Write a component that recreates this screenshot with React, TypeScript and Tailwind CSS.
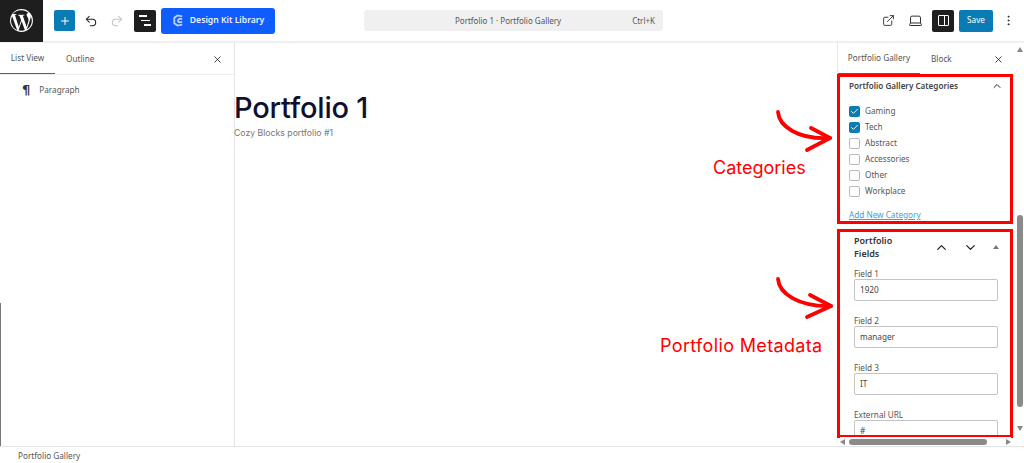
import { ChevronDown, ChevronUp, Check, ExternalLink, Laptop, MoreVertical, Plus, Redo2, Undo2, X } from "lucide-react";

const ui = "font-['Noto_Sans','Open_Sans',sans-serif]";

const categories = [
  { name: "Gaming", checked: true },
  { name: "Tech", checked: true },
  { name: "Abstract", checked: false },
  { name: "Accessories", checked: false },
  { name: "Other", checked: false },
  { name: "Workplace", checked: false },
];

const fields = [
  { label: "Field 1", value: "1920" },
  { label: "Field 2", value: "manager" },
  { label: "Field 3", value: "IT" },
  { label: "External URL", value: "#" },
];

function WpLogo() {
  return (
    <svg viewBox="0 0 24 24" className="h-[25px] w-[25px]" fill="#fff">
      <path d="M12 1a11 11 0 1 0 0 22 11 11 0 0 0 0-22Zm0 1.1c2.58 0 4.93 1 6.7 2.62h-.13c-1 0-1.7.86-1.7 1.78 0 .83.48 1.53 1 2.36.38.67.83 1.53.83 2.78 0 .86-.33 1.86-.77 3.25l-1 3.36-3.65-10.85c.6-.03 1.15-.1 1.15-.1.54-.06.48-.86-.06-.83 0 0-1.63.13-2.68.13-.99 0-2.65-.13-2.65-.13-.54-.03-.6.8-.06.83 0 0 .51.07 1.05.1l1.57 4.29-2.2 6.6L5.74 6.6c.6-.03 1.15-.1 1.15-.1.54-.06.48-.86-.06-.83 0 0-1.63.13-2.68.13h-.5A9.9 9.9 0 0 1 12 2.1ZM3 7.98l4.9 13.4A9.9 9.9 0 0 1 3 7.98Zm17.9.15A9.9 9.9 0 0 1 17 20.86l3.03-8.76c.57-1.42.76-2.56.76-3.57 0-.14 0-.27-.01-.4h.12ZM12.17 12.8l3 8.22.07.14a9.9 9.9 0 0 1-6.08.16l3.01-8.52Z" />
    </svg>
  );
}

function TopBar() {
  return (
    <header className="flex h-[43px] shrink-0 items-center border-b-2 border-[#f0f0f0] bg-white">
      <div className="flex h-[43px] w-[43px] shrink-0 items-center justify-center bg-[#1e1e1e]">
        <WpLogo />
      </div>
      <button className="ml-[11px] flex h-[21px] w-[21px] items-center justify-center rounded-[2px] bg-[#0a7cb5] text-white">
        <Plus size={12} strokeWidth={2} />
      </button>
      <Undo2 size={14} strokeWidth={1.8} className="ml-[9px] text-[#222]" />
      <Redo2 size={14} strokeWidth={1.8} className="ml-[12px] text-[#c4c4c4]" />
      <div className="ml-[10px] flex h-[22px] w-[22px] flex-col items-center justify-center gap-[3px] rounded-[2px] bg-[#1e1e1e]">
        <span className="ml-[-4px] h-[1.5px] w-[8px] bg-white" />
        <span className="ml-[1px] h-[1.5px] w-[9px] bg-white" />
        <span className="ml-[5px] h-[1.5px] w-[7px] bg-white" />
      </div>
      <button className={`${ui} ml-[5px] flex h-[26px] w-[114px] items-center justify-center gap-[5px] rounded-[3px] bg-[#0f5cff] text-[8.6px] font-semibold text-[#eef3ff]`}>
        <svg viewBox="0 0 14 14" className="h-[13px] w-[13px]" fill="none" stroke="#bcd0ff" strokeWidth="2">
          <path d="M11 2.5 6 1.5 2.5 4v6L6 12.5l5-1" />
          <path d="M11 5.5 8 5 6.5 6.5v1.5L8 9l3-.5" />
        </svg>
        Design Kit Library
      </button>
      <div className={`${ui} ml-[89px] flex h-[21px] w-[299px] items-center rounded-[3px] bg-[#f0f0f0] pr-[8px] text-[8px] text-[#555]`}>
        <span className="flex-1 pl-[20px] text-center">Portfolio 1 · Portfolio Gallery</span>
        <span>Ctrl+K</span>
      </div>
      <div className="ml-auto flex items-center">
        <ExternalLink size={13} strokeWidth={1.6} className="text-[#222]" />
        <Laptop size={15} strokeWidth={1.5} className="ml-[13px] text-[#222]" />
        <div className="ml-[9px] flex h-[22px] w-[22px] items-center justify-center rounded-[2px] bg-[#1e1e1e]">
          <div className="flex h-[11px] w-[11px] justify-end rounded-[1px] border border-white">
            <span className="w-[4px] border-l border-white" />
          </div>
        </div>
        <button className={`${ui} ml-[5px] h-[22px] w-[34px] rounded-[2px] bg-[#0a7cb5] text-[8.2px] text-white`}>Save</button>
        <MoreVertical size={13} strokeWidth={1.8} className="ml-[9px] mr-[9px] text-[#333]" />
      </div>
    </header>
  );
}

function ListPanel() {
  return (
    <aside className={`${ui} relative w-[235px] shrink-0 border-r border-[#e4e4e4] bg-white text-[8.2px] text-[#555]`}>
      <div className="flex h-[32px] items-center border-b border-[#eee] pt-[1px]">
        <div className="flex h-full w-[55px] items-center justify-center border-b-[1.5px] border-[#0a7cb5]">List View</div>
        <div className="ml-[11px]">Outline</div>
        <X size={11} strokeWidth={1.8} className="ml-auto mr-[11px] text-[#222]" />
      </div>
      <div className="flex items-center gap-[9px] pl-[22px] pt-[6px]">
        <span className="font-['DejaVu_Sans',sans-serif] text-[13px] leading-[18px] font-bold text-[#333]">¶</span>
        <span>Paragraph</span>
      </div>
      <div className="absolute bottom-0 left-0 h-[143px] w-px bg-[#777]" />
    </aside>
  );
}

function Canvas() {
  return (
    <main className="relative flex-1 bg-white">
      <h1 className="ml-[-1px] mt-[47px] font-['Inter',sans-serif] text-[29px] leading-[36px] font-medium tracking-[-0.2px] text-[#10102e]">Portfolio 1</h1>
      <p className="ml-[-1px] font-['Inter',sans-serif] text-[8.7px] leading-[14px] text-[#777]">Cozy Blocks portfolio #1</p>

      <svg className="absolute left-[535px] top-[61px] h-[50px] w-[66px]" viewBox="0 0 66 50" fill="none" stroke="#f00" strokeWidth="3.8" strokeLinecap="round" strokeLinejoin="round">
        <path d="M8 8c1 14 20 28 52 26" />
        <path d="M41 24 60 34 37 46" />
      </svg>
      <span className="absolute left-[478px] top-[114px] font-['Inter',sans-serif] text-[18px] leading-[22px] text-[#f00]">Categories</span>

      <svg className="absolute left-[535px] top-[228px] h-[50px] w-[66px]" viewBox="0 0 66 50" fill="none" stroke="#f00" strokeWidth="3.8" strokeLinecap="round" strokeLinejoin="round">
        <path d="M8 8c1 14 20 28 53 27" />
        <path d="M40 24 61 35 37 46" />
      </svg>
      <span className="absolute left-[425px] top-[292px] font-['Inter',sans-serif] text-[18px] leading-[22px] tracking-[0.35px] text-[#f00]">Portfolio Metadata</span>
    </main>
  );
}

function CategoryBox() {
  return (
    <section className="flex h-[150px] flex-col border-[3px] border-[#f00] pl-[9px] pr-[7px]">
      <div className="mt-[3px] flex items-center justify-between">
        <span className="text-[8.1px] font-semibold text-[#444]">Portfolio Gallery Categories</span>
        <ChevronUp size={12} strokeWidth={2} className="text-[#222]" />
      </div>
      <div className="mt-[11px] flex flex-col">
        {categories.map((c) => (
          <label key={c.name} className="flex h-[16px] items-center gap-[5px] text-[8.2px] text-[#555]">
            {c.checked ? (
              <span className="flex h-[11px] w-[11px] items-center justify-center rounded-[2px] bg-[#0a7cb5] text-white">
                <Check size={9} strokeWidth={2.5} />
              </span>
            ) : (
              <span className="h-[11px] w-[11px] rounded-[2px] border border-[#bbb] bg-white" />
            )}
            {c.name}
          </label>
        ))}
      </div>
      <a className="mt-[10px] text-[8.2px] text-[#3d9fd6] underline">Add New Category</a>
    </section>
  );
}

function FieldsBox() {
  return (
    <section className="mt-[5px] h-[209px] overflow-hidden border-[3px] border-[#f00] pl-[14px] pr-[12px]">
      <div className="mt-[2px] flex items-center">
        <span className="w-[60px] text-[9px] leading-[13px] font-semibold text-[#333]">Portfolio Fields</span>
        <ChevronUp size={15} strokeWidth={2} className="ml-[20px] text-[#222]" />
        <ChevronDown size={15} strokeWidth={2} className="ml-[14px] text-[#222]" />
        <span className="ml-auto mr-[-1px] h-0 w-0 border-x-[3px] border-b-[4px] border-x-transparent border-b-[#777]" />
      </div>
      <div className="mt-[8px] flex flex-col gap-[14px]">
        {fields.map((f) => (
          <div key={f.label}>
            <div className="text-[8.2px] leading-[11px] text-[#555]">{f.label}</div>
            <div className="flex h-[22px] items-center rounded-[2px] border border-[#c4c4c4] pl-[5px] text-[8.2px] text-[#444]">{f.value}</div>
          </div>
        ))}
      </div>
    </section>
  );
}

function SettingsPanel() {
  return (
    <aside className={`${ui} relative flex w-[187px] shrink-0 flex-col bg-white`}>
      <div className="flex h-[31px] shrink-0 items-center border-l border-[#e8e8e8] pr-[20px] pt-[1px] text-[8.2px] text-[#555]">
        <div className="flex h-full w-[82px] items-center justify-center border-b-[1.5px] border-[#0a7cb5]">Portfolio Gallery</div>
        <div className="ml-[11px]">Block</div>
        <X size={11} strokeWidth={1.8} className="ml-auto text-[#222]" />
      </div>
      <div className="mr-[11px]">
        <CategoryBox />
        <FieldsBox />
      </div>
      {/* scrollbars */}
      <div className="absolute bottom-0 right-0 top-0 flex w-[8px] flex-col items-center bg-white py-[4px]">
        <span className="h-0 w-0 border-x-[3.5px] border-b-[5px] border-x-transparent border-b-[#888]" />
        <span className="mt-[163px] h-[192px] w-[6px] rounded-full bg-[#8a8a8a]" />
        <span className="mt-auto mb-[11px] h-0 w-0 border-x-[3.5px] border-t-[5px] border-x-transparent border-t-[#888]" />
      </div>
      <div className="absolute bottom-0 left-[3px] flex h-[9px] w-[171px] items-center bg-white">
        <span className="h-0 w-0 border-y-[3.5px] border-r-[5px] border-y-transparent border-r-[#888]" />
        <span className="ml-[4px] h-[6px] w-[138px] rounded-full bg-[#8a8a8a]" />
        <span className="ml-auto h-0 w-0 border-y-[3.5px] border-l-[5px] border-y-transparent border-l-[#888]" />
      </div>
    </aside>
  );
}

export default function App() {
  return (
    <div className="flex h-[463px] w-[1024px] flex-col overflow-hidden bg-white">
      <TopBar />
      <div className="flex min-h-0 flex-1">
        <ListPanel />
        <Canvas />
        <SettingsPanel />
      </div>
      <footer className={`${ui} flex h-[17px] shrink-0 items-center border-t border-[#e4e4e4] pl-[18px] pt-[2px] text-[8.2px] text-[#555]`}>Portfolio Gallery</footer>
    </div>
  );
}
